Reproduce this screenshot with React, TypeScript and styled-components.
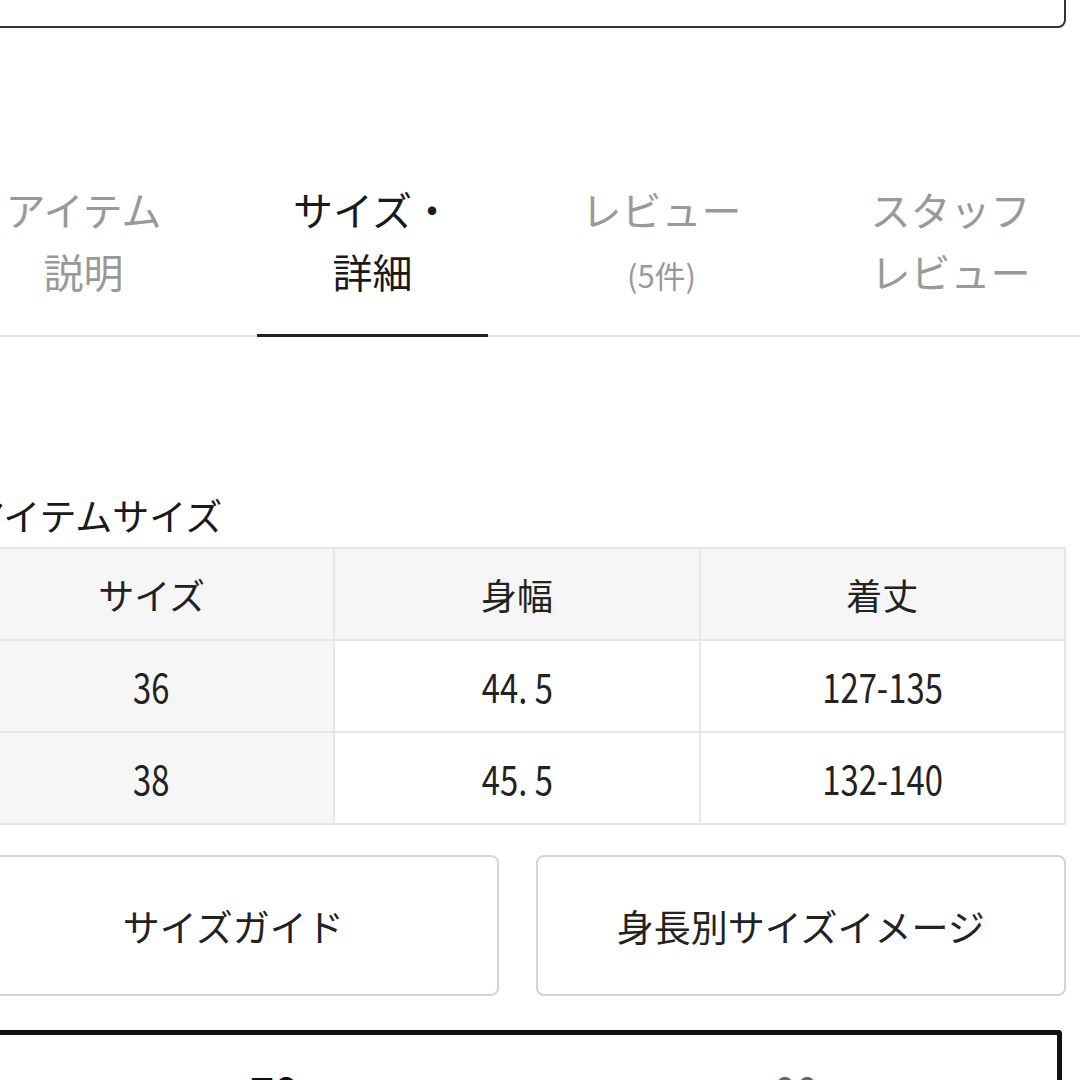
import styled, { createGlobalStyle } from 'styled-components'

const GlobalStyle = createGlobalStyle`
  html, body {
    margin: 0;
    padding: 0;
    background: #fff;
    overflow: hidden;
  }
  body {
    font-family: "Noto Sans CJK JP", "Noto Sans", sans-serif;
    color: #222;
  }
`

const Page = styled.div`
  width: 1080px;
  height: 1080px;
  overflow: hidden;
`

const Section = styled.div`
  margin-left: -32px;
  width: 1098px;
`

const TopBox = styled.div`
  margin-top: -40px;
  height: 64px;
  border: 2px solid #333;
  border-radius: 8px;
`

const TabBar = styled.div`
  display: flex;
  margin-top: 122px;
  margin-left: -61px;
  width: 1156px;
  border-bottom: 2px solid #e6e6e6;
`

const Tab = styled.div<{ active?: boolean }>`
  position: relative;
  flex: 1;
  height: 185px;
  padding-top: 28px;
  box-sizing: border-box;
  text-align: center;
  font-size: 40px;
  line-height: 62px;
  color: ${props => (props.active ? '#1a1a1a' : '#999')};

  &::after {
    content: '';
    display: ${props => (props.active ? 'block' : 'none')};
    position: absolute;
    left: 10%;
    right: 10%;
    bottom: -2px;
    height: 3px;
    background: #222;
  }
`

const TabCount = styled.span`
  font-size: 31px;
`

const Heading = styled.div`
  margin-top: 158px;
  font-size: 37px;
  line-height: 40px;
  color: #1a1a1a;
`

const SizeTable = styled.table`
  margin-top: 12px;
  width: 100%;
  border-collapse: collapse;
  table-layout: fixed;
  border: 2px solid #e6e6e6;
`

const HeadCell = styled.th`
  height: 90px;
  padding: 0;
  background: #f6f6f6;
  border: 2px solid #e6e6e6;
  font-size: 36px;
  font-weight: 400;
  color: #222;
`

const Cell = styled.td<{ shaded?: boolean }>`
  height: 90px;
  padding: 0;
  text-align: center;
  background: ${props => (props.shaded ? '#f6f6f6' : '#fff')};
  border: 2px solid #e6e6e6;
  color: #222;
`

const Num = styled.span`
  display: inline-block;
  font-size: 40px;
  transform: scaleX(0.82);
`

const ButtonRow = styled.div`
  display: flex;
  gap: 37px;
  margin-top: 30px;
`

const GuideButton = styled.div`
  flex: 1;
  height: 141px;
  box-sizing: border-box;
  border: 2px solid #d4d4d4;
  border-radius: 8px;
  display: flex;
  align-items: center;
  justify-content: center;
  font-size: 37px;
  color: #222;
`

const BottomBox = styled.div`
  margin-top: 34px;
  width: 1094px;
  height: 120px;
  box-sizing: border-box;
  border: 5px solid #111;
  border-bottom: none;
  border-radius: 4px 4px 0 0;
  display: flex;
  padding-top: 26px;
  padding-left: 40px;
`

const BottomLabel = styled.div<{ muted?: boolean }>`
  flex: 1;
  text-align: center;
  font-size: 40px;
  font-weight: ${props => (props.muted ? 400 : 900)};
  color: ${props => (props.muted ? '#666' : '#111')};
`

const rows = [
  ['36', '44. 5', '127-135'],
  ['38', '45. 5', '132-140'],
]

export default function App() {
  return (
    <Page>
      <GlobalStyle />
      <Section>
        <TopBox />
      </Section>
      <TabBar>
        <Tab>
          アイテム
          <br />
          説明
        </Tab>
        <Tab active>
          サイズ・
          <br />
          詳細
        </Tab>
        <Tab>
          レビュー
          <br />
          <TabCount>(5件)</TabCount>
        </Tab>
        <Tab>
          スタッフ
          <br />
          レビュー
        </Tab>
      </TabBar>
      <Section>
        <Heading>アイテムサイズ</Heading>
        <SizeTable>
          <thead>
            <tr>
              <HeadCell>サイズ</HeadCell>
              <HeadCell>身幅</HeadCell>
              <HeadCell>着丈</HeadCell>
            </tr>
          </thead>
          <tbody>
            {rows.map(row => (
              <tr key={row[0]}>
                <Cell shaded>
                  <Num>{row[0]}</Num>
                </Cell>
                <Cell>
                  <Num>{row[1]}</Num>
                </Cell>
                <Cell>
                  <Num>{row[2]}</Num>
                </Cell>
              </tr>
            ))}
          </tbody>
        </SizeTable>
        <ButtonRow>
          <GuideButton>サイズガイド</GuideButton>
          <GuideButton>身長別サイズイメージ</GuideButton>
        </ButtonRow>
        <BottomBox>
          <BottomLabel>70</BottomLabel>
          <BottomLabel muted>00</BottomLabel>
        </BottomBox>
      </Section>
    </Page>
  )
}
